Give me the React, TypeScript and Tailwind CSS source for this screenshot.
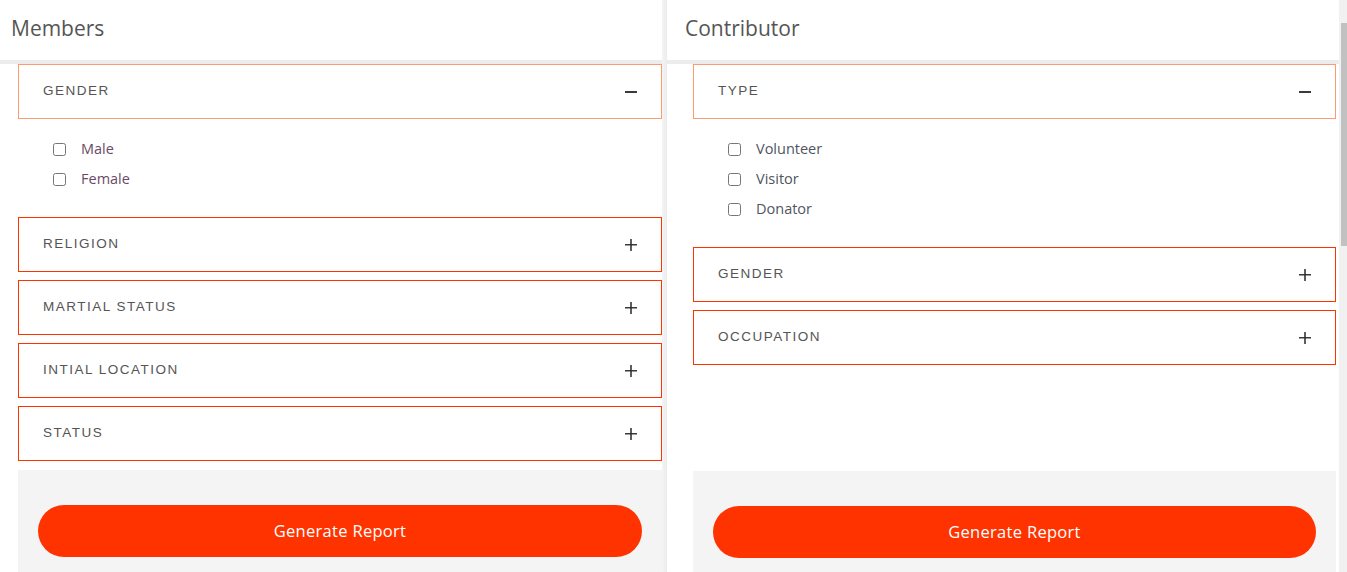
import { useState } from 'react'

type Section = { title: string; options: string[] }

const members: Section[] = [
  { title: 'GENDER', options: ['Male', 'Female'] },
  { title: 'RELIGION', options: [] },
  { title: 'MARTIAL STATUS', options: [] },
  { title: 'INTIAL LOCATION', options: [] },
  { title: 'STATUS', options: [] },
]

const contributor: Section[] = [
  { title: 'TYPE', options: ['Volunteer', 'Visitor', 'Donator'] },
  { title: 'GENDER', options: [] },
  { title: 'OCCUPATION', options: [] },
]

function PlusMinus({ open }: { open: boolean }) {
  return (
    <svg width="12" height="12" viewBox="0 0 12 12" className="shrink-0">
      <rect x="0" y="5" width="12" height={open ? 2 : 1.5} fill="#3a3a3a" />
      {!open && <rect x="5.25" y="0" width="1.5" height="12" fill="#2a2a2a" />}
    </svg>
  )
}

function Accordion({ sections, optionColor }: { sections: Section[]; optionColor: string }) {
  const [openIdx, setOpenIdx] = useState(0)

  return (
    <div className="flex flex-col">
      {sections.map((s, i) => {
        const open = i === openIdx
        return (
          <div key={s.title} className={i === 0 ? '' : 'mt-[8px]'}>
            <button
              onClick={() => setOpenIdx(open ? -1 : i)}
              className={`w-full h-[55px] flex items-center justify-between pl-[24px] pr-[24px] border ${open ? 'border-[#ff9a70]' : 'border-[#ff3300]'} bg-white`}
            >
              <span className="text-[13.5px] tracking-[1.5px] text-[#555] font-['Liberation_Sans',sans-serif]">{s.title}</span>
              <PlusMinus open={open} />
            </button>
            {open && (
              <div className="pt-[15px] pb-[15px] pl-[35px] flex flex-col">
                {s.options.map((o) => (
                  <label key={o} className="h-[30px] flex items-center gap-[15px] cursor-pointer">
                    <input type="checkbox" className="w-[13px] h-[13px] accent-[#555]" />
                    <span className={`text-[14.5px] ${optionColor} font-['Open_Sans',sans-serif]`}>{o}</span>
                  </label>
                ))}
              </div>
            )}
          </div>
        )
      })}
    </div>
  )
}

function ReportBox() {
  return (
    <div className="bg-[#f4f4f4] px-[20px] pt-[35px] pb-[20px]">
      <button className="w-full h-[52px] rounded-full bg-[#ff3300] text-white text-[16.5px] tracking-[0.3px] font-['Open_Sans',sans-serif]">
        Generate Report
      </button>
    </div>
  )
}

export default function App() {
  return (
    <div className="w-full h-[572px] overflow-hidden flex flex-row bg-white font-['Open_Sans',sans-serif]">
      <div className="w-[662px] shrink-0 flex flex-col">
        <div className="h-[60px] shrink-0 flex items-center pl-[11px] pb-[2px] text-[21px] text-[#555]">Members</div>
        <div className="h-[4px] shrink-0 bg-[#ececec]" />
        <div className="pl-[18px] shrink-0">
          <Accordion sections={members} optionColor="text-[#6a4a68]" />
          <div className="mt-[9px]">
            <ReportBox />
          </div>
        </div>
      </div>

      <div className="w-[5px] shrink-0 bg-gradient-to-r from-[#f4f4f4] to-[#ececec]" />

      <div className="flex-1 flex flex-col">
        <div className="h-[60px] shrink-0 flex items-center pl-[18px] pb-[2px] text-[21px] text-[#555]">Contributor</div>
        <div className="h-[4px] shrink-0 bg-[#ececec]" />
        <div className="pl-[26px] pr-[3px] shrink-0">
          <Accordion sections={contributor} optionColor="text-[#4f5560]" />
          <div className="mt-[106px]">
            <ReportBox />
          </div>
        </div>
      </div>

      <div className="w-[8px] shrink-0 bg-[#f1f1f1] flex flex-col pt-[23px] pl-[2px]">
        <div className="h-[223px] shrink-0 bg-[#c1c1c1]" />
      </div>
    </div>
  )
}
